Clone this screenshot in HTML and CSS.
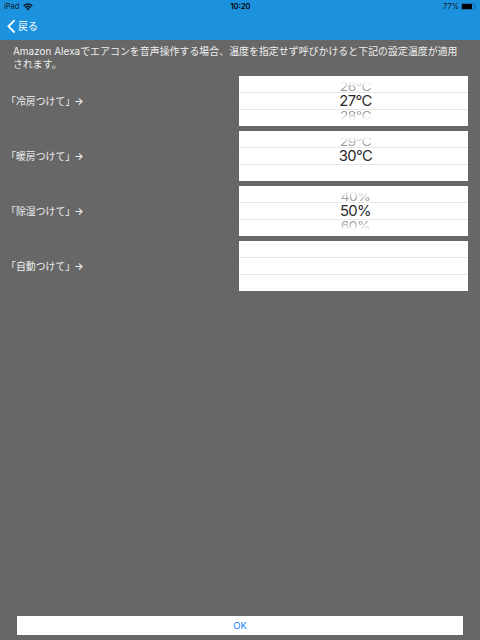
FILE: index.html
```html
<!DOCTYPE html>
<html lang="ja">
<head>
    <meta charset="UTF-8">
    <meta name="viewport" content="width=device-width, initial-scale=1.0">
    <title>設定温度</title>
    <link rel="stylesheet" href="styles.css">
</head>
<body>
    <header class="header">
        <div class="status-bar">
            <div class="status-left">
                <span>iPad</span>
                <svg class="wifi" width="10" height="8" viewBox="0 0 10 8">
                    <path d="M0.7 2.8 Q5 -0.8 9.3 2.8 M2.3 4.6 Q5 2.3 7.7 4.6" fill="none" stroke="#0b1a26" stroke-width="1.5"/>
                    <path d="M3.3 5.6 Q5 4.3 6.7 5.6 L5 7.4 Z" fill="#0b1a26"/>
                </svg>
            </div>
            <div class="status-time">10:20</div>
            <div class="status-right">
                <span>77%</span>
                <svg class="battery" width="16" height="7" viewBox="0 0 16 7">
                    <rect x="0.4" y="0.4" width="13.2" height="6.2" rx="1.3" fill="none" stroke="#0d5284" stroke-width="0.6"/>
                    <rect x="1" y="1" width="10" height="5" rx="0.6" fill="#000"/>
                    <path d="M14.4 2.3 Q15.6 3.5 14.4 4.7 Z" fill="#0d5284"/>
                </svg>
            </div>
        </div>
        <div class="nav">
            <svg class="chevron" width="9" height="15" viewBox="0 0 9 15">
                <path d="M7.6 1.1 L1.5 7.3 L7.6 13.5" fill="none" stroke="#fff" stroke-width="1.9"/>
            </svg>
            <span>戻る</span>
        </div>
    </header>

    <main class="content">
        <p class="description">Amazon Alexaでエアコンを音声操作する場合、温度を指定せず呼びかけると下記の設定温度が適用<br>されます。</p>

        <div class="row">
            <div class="label">「冷房つけて」<span class="arrow">→</span></div>
            <div class="picker">
                <div class="item prev"><span>26°C</span></div>
                <div class="item selected"><span>27°C</span></div>
                <div class="item next"><span>28°C</span></div>
            </div>
        </div>
        <div class="row">
            <div class="label">「暖房つけて」<span class="arrow">→</span></div>
            <div class="picker">
                <div class="item prev"><span>29°C</span></div>
                <div class="item selected"><span>30°C</span></div>
                <div class="item next"></div>
            </div>
        </div>
        <div class="row">
            <div class="label">「除湿つけて」<span class="arrow">→</span></div>
            <div class="picker">
                <div class="item prev"><span>40%</span></div>
                <div class="item selected"><span>50%</span></div>
                <div class="item next"><span>60%</span></div>
            </div>
        </div>
        <div class="row">
            <div class="label">「自動つけて」<span class="arrow">→</span></div>
            <div class="picker">
                <div class="item prev"></div>
                <div class="item selected"></div>
                <div class="item next"></div>
            </div>
        </div>
    </main>

    <button class="ok">OK</button>
</body>
</html>
```
FILE: styles.css
```css
* {
    box-sizing: border-box;
}
body {
    margin: 0;
    height: 100vh;
    display: flex;
    flex-direction: column;
    background-color: #676767;
    color: #f0f0f0;
    font-family: Inter, "Noto Sans CJK JP", sans-serif;
    font-size: 9.9px;
    overflow: hidden;
}
.header {
    height: 40px;
    background-color: #1c92de;
}
.status-bar {
    display: grid;
    grid-template-columns: 1fr auto 1fr;
    align-items: center;
    height: 13px;
    padding: 0 3px 0 4px;
    color: #0b1a26;
    font-size: 7.5px;
    line-height: 13px;
}
.status-left, .status-right {
    display: flex;
    align-items: center;
    gap: 4px;
}
.status-right {
    justify-content: flex-end;
    gap: 2px;
}
.status-time {
    font-weight: 600;
    color: #000;
}
.nav {
    display: flex;
    align-items: center;
    gap: 2px;
    height: 27px;
    padding-left: 7px;
    color: #fff;
}
.nav span {
    padding-bottom: 2px;
}
.content {
    flex: 1;
}
.description {
    margin: 0 0 4.6px;
    padding: 5px 0 0 13px;
    height: 31px;
    line-height: 12.5px;
    letter-spacing: 0.055px;
    white-space: nowrap;
}
.row {
    display: flex;
    align-items: center;
    height: 50px;
    margin-bottom: 5px;
    padding: 0 12.5px 0 6px;
}
.label {
    flex: 1;
    white-space: nowrap;
}
.arrow {
    margin-left: -1px;
    font-weight: 600;
}
.picker {
    width: 229px;
    height: 50px;
    background-color: #fff;
    color: #2a2a2a;
    font-size: 14.8px;
    letter-spacing: -0.55px;
}
.item {
    display: flex;
    justify-content: center;
    height: 17px;
    line-height: 17px;
    overflow: hidden;
}
.item span {
    position: relative;
    left: 2.5px;
}
.selected {
    border-top: 1px solid #e8e8e8;
    border-bottom: 1px solid #e8e8e8;
    height: 18px;
}
.prev, .next {
    height: 16px;
    color: #999;
    font-size: 14px;
}
.prev span {
    transform: translateY(2px) scaleY(0.8);
    -webkit-mask-image: linear-gradient(transparent 15%, #000 75%);
    mask-image: linear-gradient(transparent 15%, #000 75%);
}
.next span {
    transform: translateY(-3px) scaleY(0.8);
    -webkit-mask-image: linear-gradient(#000 30%, transparent 90%);
    mask-image: linear-gradient(#000 30%, transparent 90%);
}
.ok {
    height: 19px;
    margin: 0 17px 5px;
    padding: 0;
    border: none;
    background-color: #fff;
    color: #147efb;
    font-family: inherit;
    font-size: 9.5px;
    cursor: pointer;
}
```
